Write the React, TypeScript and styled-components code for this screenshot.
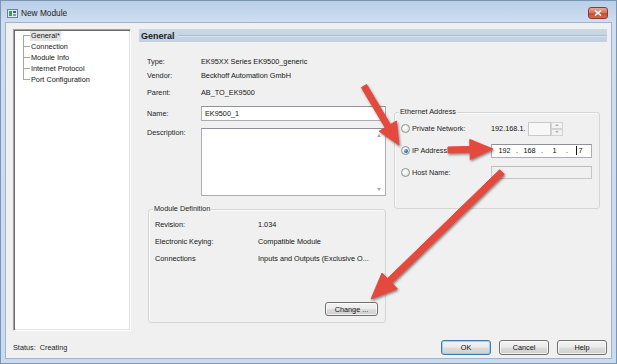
import React from 'react';
import styled, { createGlobalStyle } from 'styled-components';

const GlobalStyle = createGlobalStyle`
  html, body { margin: 0; padding: 0; background: #ffffff; }
  body {
    font-family: 'Liberation Sans', Arial, sans-serif;
    font-size: 7.3px;
    color: #151515;
  }
  * { box-sizing: border-box; }
`;

const Window = styled.div`
  position: relative;
  width: 617px;
  height: 364px;
  border: 1px solid #7b95b4;
  padding: 0 4px 4px 4px;
  background: linear-gradient(180deg, #b9cee8 0px, #cfdef0 21px, #c9dbf0 100%);
  display: flex;
  flex-direction: column;
  overflow: hidden;
`;

const TitleBar = styled.div`
  height: 21px;
  flex: none;
  display: flex;
  align-items: center;
  gap: 3px;
  padding: 3px 4px 0 2px;
`;

const TitleText = styled.span`
  font-size: 8.3px;
  color: #1c1c1c;
  flex: 1;
`;

const CloseButton = styled.div`
  width: 20px;
  height: 12px;
  border: 1px solid #8a3b2c;
  border-radius: 3px;
  background: linear-gradient(180deg, #e9a999 0%, #d87460 45%, #c4503a 55%, #cf6a52 100%);
  display: flex;
  align-items: center;
  justify-content: center;
`;

const Client = styled.div`
  flex: 1;
  display: flex;
  flex-direction: column;
  background: #f0f0f0;
  border: 1px solid #9fb3cb;
`;

const Main = styled.div`
  display: flex;
  gap: 8px;
  height: 308px;
  flex: none;
  padding: 6px 4px 0 7px;
`;

const Tree = styled.div`
  width: 118px;
  height: 302px;
  flex: none;
  background: #ffffff;
  border-top: 1px solid #a0a0a0;
  border-left: 1px solid #a0a0a0;
  border-right: 1px solid #ffffff;
  border-bottom: 1px solid #ffffff;
  box-shadow: inset 1px 1px 0 #6d6d6d, inset -1px -1px 0 #e3e3e3;
  padding-left: 9px;
`;

const TreeItem = styled.div`
  display: flex;
  align-items: center;
  height: 11px;
`;

const Connector = styled.span<{ $pos: 'first' | 'mid' | 'last' }>`
  width: 7px;
  height: 11px;
  flex: none;
  background:
    linear-gradient(#a6a6a6, #a6a6a6) 0 ${(p) => (p.$pos === 'first' ? '5px' : '0')} /
      1px ${(p) => (p.$pos === 'mid' ? '11px' : '6px')} no-repeat,
    linear-gradient(#a6a6a6, #a6a6a6) 0 5px / 7px 1px no-repeat;
`;

const TreeLabel = styled.span<{ $selected?: boolean }>`
  padding: 0 1px;
  line-height: 10px;
  background: ${(p) => (p.$selected ? '#e4e4e4' : 'transparent')};
  color: #151515;
`;

const Content = styled.div`
  flex: 1;
  min-width: 0;
  display: flex;
  flex-direction: column;
`;

const Header = styled.div`
  height: 13px;
  flex: none;
  display: flex;
  align-items: center;
  gap: 3px;
  padding-left: 2px;
  background: linear-gradient(180deg, #cad7e5 0%, #c2d1e1 100%);
  font-size: 9px;
  font-weight: bold;
  color: #1b1b1b;
`;

const HeaderRule = styled.div`
  flex: 1;
  height: 2px;
  border-top: 1px solid #adbfd3;
  border-bottom: 1px solid #d7e2ee;
`;

const Body = styled.div`
  display: flex;
  gap: 8px;
  padding-left: 8px;
`;

const LeftCol = styled.div`
  width: 239px;
  flex: none;
  display: flex;
  flex-direction: column;
`;

const RightCol = styled.div`
  width: 206px;
  flex: none;
  margin-top: 70px;
`;

const FieldRow = styled.div<{ $h: number; $mt?: number; $top?: boolean }>`
  display: grid;
  grid-template-columns: 54px 185px;
  height: ${(p) => p.$h}px;
  margin-top: ${(p) => p.$mt ?? 0}px;
  align-items: ${(p) => (p.$top ? 'start' : 'center')};
  line-height: 10px;
`;

const Label = styled.span`
  color: #1e1e1e;
`;

const TextBox = styled.div<{ $w?: number; $h: number; $disabled?: boolean }>`
  width: ${(p) => (p.$w ? `${p.$w}px` : '100%')};
  height: ${(p) => p.$h}px;
  border: 1px solid ${(p) => (p.$disabled ? '#c6c6c6' : '#abadb3')};
  border-top-color: ${(p) => (p.$disabled ? '#bdbdbd' : '#8f9299')};
  background: ${(p) => (p.$disabled ? '#f0f0f0' : '#ffffff')};
  display: flex;
  align-items: center;
  padding: 0 3px;
  color: #111;
`;

const TextArea = styled.div`
  height: 68px;
  border: 1px solid #abadb3;
  border-top-color: #8f9299;
  background: #ffffff;
  display: flex;
  justify-content: flex-end;
`;

const ScrollBar = styled.div`
  width: 12px;
  display: flex;
  flex-direction: column;
  justify-content: space-between;
  align-items: center;
  padding: 5px 0 4px 0;
`;

const UpTri = styled.span`
  width: 0;
  height: 0;
  border-left: 2.5px solid transparent;
  border-right: 2.5px solid transparent;
  border-bottom: 3px solid #a8a8a8;
`;

const DownTri = styled.span`
  width: 0;
  height: 0;
  border-left: 2.5px solid transparent;
  border-right: 2.5px solid transparent;
  border-top: 3px solid #a8a8a8;
`;

const GroupBox = styled.div<{ $w: number; $h: number; $mt?: number; $ml?: number }>`
  width: ${(p) => p.$w}px;
  height: ${(p) => p.$h}px;
  margin-top: ${(p) => p.$mt ?? 0}px;
  margin-left: ${(p) => p.$ml ?? 0}px;
  border: 1px solid #d5d5d5;
  border-radius: 3px;
  box-shadow: inset 1px 1px 0 #fafafa;
  display: flex;
  flex-direction: column;
`;

const Legend = styled.div`
  align-self: flex-start;
  margin: -6px 0 0 4px;
  padding: 0 1px;
  line-height: 10px;
  background: #f0f0f0;
  color: #1e1e1e;
`;

const DefRow = styled.div<{ $mt?: number }>`
  display: grid;
  grid-template-columns: 103px 1fr;
  height: 17px;
  align-items: center;
  padding-left: 6px;
  margin-top: ${(p) => p.$mt ?? 0}px;
  white-space: nowrap;
`;

const Button = styled.button<{ $w?: number; $h?: number; $default?: boolean }>`
  width: ${(p) => p.$w ?? 50}px;
  height: ${(p) => p.$h ?? 15}px;
  padding: 0;
  font: inherit;
  color: #111;
  border: 1px solid ${(p) => (p.$default ? '#3d7bad' : '#707070')};
  border-radius: 3px;
  background: linear-gradient(180deg, #f3f3f3 0%, #ebebeb 48%, #dddddd 52%, #cfcfcf 100%);
  box-shadow: inset 0 0 0 1px ${(p) => (p.$default ? 'rgba(140,210,245,.9)' : 'rgba(255,255,255,.7)')};
`;

const ChangeButton = styled(Button)`
  margin-top: auto;
  align-self: flex-end;
  margin-right: 7px;
  margin-bottom: 6px;
`;

const EthRow = styled.div`
  display: grid;
  grid-template-columns: 90px 1fr;
  height: 21px;
  margin-top: 1px;
  align-items: center;
  padding-left: 6px;
`;

const RadioLabel = styled.label`
  display: flex;
  align-items: center;
  gap: 2px;
  color: #1e1e1e;
`;

const Radio = styled.span<{ $checked?: boolean }>`
  width: 9px;
  height: 9px;
  flex: none;
  border-radius: 50%;
  border: 1px solid #8e8f8f;
  background: radial-gradient(circle at 40% 35%, #ffffff 0%, #e6e6e6 70%, #d0d0d0 100%);
  display: flex;
  align-items: center;
  justify-content: center;
  &::after {
    content: '';
    display: ${(p) => (p.$checked ? 'block' : 'none')};
    width: 4px;
    height: 4px;
    border-radius: 50%;
    background: radial-gradient(circle at 35% 35%, #7fb8ec 0%, #1d5fa6 70%);
  }
`;

const FieldLine = styled.div`
  display: flex;
  align-items: center;
`;

const PrivateText = styled.span`
  width: 37px;
`;

const SpinBox = styled.div`
  width: 23px;
  height: 14px;
  border: 1px solid #c8c8c8;
  background: #f7f7f7;
`;

const SpinButtons = styled.div`
  width: 12px;
  height: 14px;
  display: flex;
  flex-direction: column;
`;

const SpinHalf = styled.div`
  flex: 1;
  border: 1px solid #d3d3d3;
  background: #f2f2f2;
  display: flex;
  align-items: center;
  justify-content: center;
`;

const SmallUp = styled.span`
  width: 0;
  height: 0;
  border-left: 2px solid transparent;
  border-right: 2px solid transparent;
  border-bottom: 2px solid #b0b0b0;
`;

const SmallDown = styled.span`
  width: 0;
  height: 0;
  border-left: 2px solid transparent;
  border-right: 2px solid transparent;
  border-top: 2px solid #b0b0b0;
`;

const IpBox = styled.div`
  width: 101px;
  height: 14px;
  border: 1px solid #abadb3;
  border-top-color: #8f9299;
  background: #ffffff;
  display: flex;
  align-items: center;
  padding-left: 2px;
  color: #111;
`;

const IpSeg = styled.span`
  width: 21px;
  text-align: center;
  display: flex;
  align-items: center;
  justify-content: center;
`;

const IpDot = styled.span`
  width: 4px;
  text-align: center;
`;

const Caret = styled.span`
  width: 1px;
  height: 9px;
  background: #111;
  margin-right: 1px;
`;

const Footer = styled.div`
  flex: 1;
  display: flex;
  align-items: flex-start;
  padding: 9px 4px 0 7px;
`;

const Status = styled.span`
  line-height: 15px;
  white-space: pre;
  color: #1e1e1e;
`;

const ButtonGroup = styled.div`
  margin-left: auto;
  display: flex;
  gap: 8px;
`;

const Overlay = styled.svg`
  position: absolute;
  top: -1px;
  left: -1px;
  width: 617px;
  height: 364px;
  pointer-events: none;
`;

type ArrowSpec = { x1: number; y1: number; x2: number; y2: number; s: number; hl: number; hw: number };

const arrows: ArrowSpec[] = [
  { x1: 364, y1: 86, x2: 399, y2: 145, s: 6, hl: 22, hw: 20 },
  { x1: 448, y1: 150, x2: 493, y2: 149, s: 6, hl: 23, hw: 20 },
  { x1: 502, y1: 172, x2: 371, y2: 299, s: 6.5, hl: 26, hw: 22 },
];

function arrowPoints(a: ArrowSpec): string {
  const dx = a.x2 - a.x1;
  const dy = a.y2 - a.y1;
  const L = Math.hypot(dx, dy);
  const ux = dx / L;
  const uy = dy / L;
  const nx = -uy;
  const ny = ux;
  const bx = a.x2 - ux * a.hl;
  const by = a.y2 - uy * a.hl;
  const pts: number[][] = [
    [a.x1 + (nx * a.s) / 2, a.y1 + (ny * a.s) / 2],
    [bx + (nx * a.s) / 2, by + (ny * a.s) / 2],
    [bx + (nx * a.hw) / 2, by + (ny * a.hw) / 2],
    [a.x2, a.y2],
    [bx - (nx * a.hw) / 2, by - (ny * a.hw) / 2],
    [bx - (nx * a.s) / 2, by - (ny * a.s) / 2],
    [a.x1 - (nx * a.s) / 2, a.y1 - (ny * a.s) / 2],
  ];
  return pts.map((q) => q.map((v) => v.toFixed(1)).join(',')).join(' ');
}

const treeItems = ['General*', 'Connection', 'Module Info', 'Internet Protocol', 'Port Configuration'];

export default function App() {
  return (
    <>
      <GlobalStyle />
      <Window>
        <TitleBar>
          <svg width="11" height="9" viewBox="0 0 11 9">
            <rect x="0.5" y="0.5" width="10" height="8" fill="#e4e9ef" stroke="#6f8195" />
            <rect x="2" y="2" width="3" height="5" fill="#3f9d55" />
            <rect x="6" y="2" width="3" height="2" fill="#2f62a8" />
            <rect x="6" y="5" width="3" height="2" fill="#8a96a3" />
          </svg>
          <TitleText>New Module</TitleText>
          <CloseButton>
            <svg width="8" height="6" viewBox="0 0 8 6">
              <path d="M1 0.5 L7 5.5 M7 0.5 L1 5.5" stroke="#ffffff" strokeWidth="1.6" />
            </svg>
          </CloseButton>
        </TitleBar>
        <Client>
          <Main>
            <Tree>
              {treeItems.map((t, i) => (
                <TreeItem key={t}>
                  <Connector $pos={i === 0 ? 'first' : i === treeItems.length - 1 ? 'last' : 'mid'} />
                  <TreeLabel $selected={i === 0}>{t}</TreeLabel>
                </TreeItem>
              ))}
            </Tree>
            <Content>
              <Header>
                <span>General</span>
                <HeaderRule />
              </Header>
              <Body>
                <LeftCol>
                  <FieldRow $h={14} $mt={13}>
                    <Label>Type:</Label>
                    <span>EK95XX Series EK9500_generic</span>
                  </FieldRow>
                  <FieldRow $h={14}>
                    <Label>Vendor:</Label>
                    <span>Beckhoff Automation GmbH</span>
                  </FieldRow>
                  <FieldRow $h={14} $mt={3}>
                    <Label>Parent:</Label>
                    <span>AB_TO_EK9500</span>
                  </FieldRow>
                  <FieldRow $h={15} $mt={6}>
                    <Label>Name:</Label>
                    <TextBox $h={15}>EK9500_1</TextBox>
                  </FieldRow>
                  <FieldRow $h={68} $mt={7} $top>
                    <Label>Description:</Label>
                    <TextArea>
                      <ScrollBar>
                        <UpTri />
                        <DownTri />
                      </ScrollBar>
                    </TextArea>
                  </FieldRow>
                  <GroupBox $w={238} $h={114} $mt={13} $ml={1}>
                    <Legend>Module Definition</Legend>
                    <DefRow $mt={1.5}>
                      <span>Revision:</span>
                      <span>1.034</span>
                    </DefRow>
                    <DefRow>
                      <span>Electronic Keying:</span>
                      <span>Compatible Module</span>
                    </DefRow>
                    <DefRow>
                      <span>Connections</span>
                      <span>Inputs and Outputs (Exclusive O...</span>
                    </DefRow>
                    <ChangeButton $w={53} $h={14}>Change ...</ChangeButton>
                  </GroupBox>
                </LeftCol>
                <RightCol>
                  <GroupBox $w={206} $h={97}>
                    <Legend>Ethernet Address</Legend>
                    <EthRow>
                      <RadioLabel>
                        <Radio />
                        Private Network:
                      </RadioLabel>
                      <FieldLine>
                        <PrivateText>192.168.1.</PrivateText>
                        <SpinBox />
                        <SpinButtons>
                          <SpinHalf>
                            <SmallUp />
                          </SpinHalf>
                          <SpinHalf>
                            <SmallDown />
                          </SpinHalf>
                        </SpinButtons>
                      </FieldLine>
                    </EthRow>
                    <EthRow>
                      <RadioLabel>
                        <Radio $checked />
                        IP Address:
                      </RadioLabel>
                      <IpBox>
                        <IpSeg>192</IpSeg>
                        <IpDot>.</IpDot>
                        <IpSeg>168</IpSeg>
                        <IpDot>.</IpDot>
                        <IpSeg>1</IpSeg>
                        <IpDot>.</IpDot>
                        <IpSeg>
                          <Caret />7
                        </IpSeg>
                      </IpBox>
                    </EthRow>
                    <EthRow>
                      <RadioLabel>
                        <Radio />
                        Host Name:
                      </RadioLabel>
                      <TextBox $w={101} $h={13} $disabled />
                    </EthRow>
                  </GroupBox>
                </RightCol>
              </Body>
            </Content>
          </Main>
          <Footer>
            <Status>Status:  Creating</Status>
            <ButtonGroup>
              <Button $default>OK</Button>
              <Button>Cancel</Button>
              <Button>Help</Button>
            </ButtonGroup>
          </Footer>
        </Client>
        <Overlay viewBox="0 0 617 364">
          <defs>
            <filter id="arrowShadow" x="-20%" y="-20%" width="140%" height="140%">
              <feDropShadow dx="1" dy="1.5" stdDeviation="1.3" floodColor="#2a2a2a" floodOpacity="0.55" />
            </filter>
          </defs>
          {arrows.map((a, i) => (
            <polygon
              key={i}
              points={arrowPoints(a)}
              fill="#e4483d"
              stroke="#e4483d"
              strokeWidth="1"
              strokeLinejoin="round"
              filter="url(#arrowShadow)"
            />
          ))}
        </Overlay>
      </Window>
    </>
  );
}
